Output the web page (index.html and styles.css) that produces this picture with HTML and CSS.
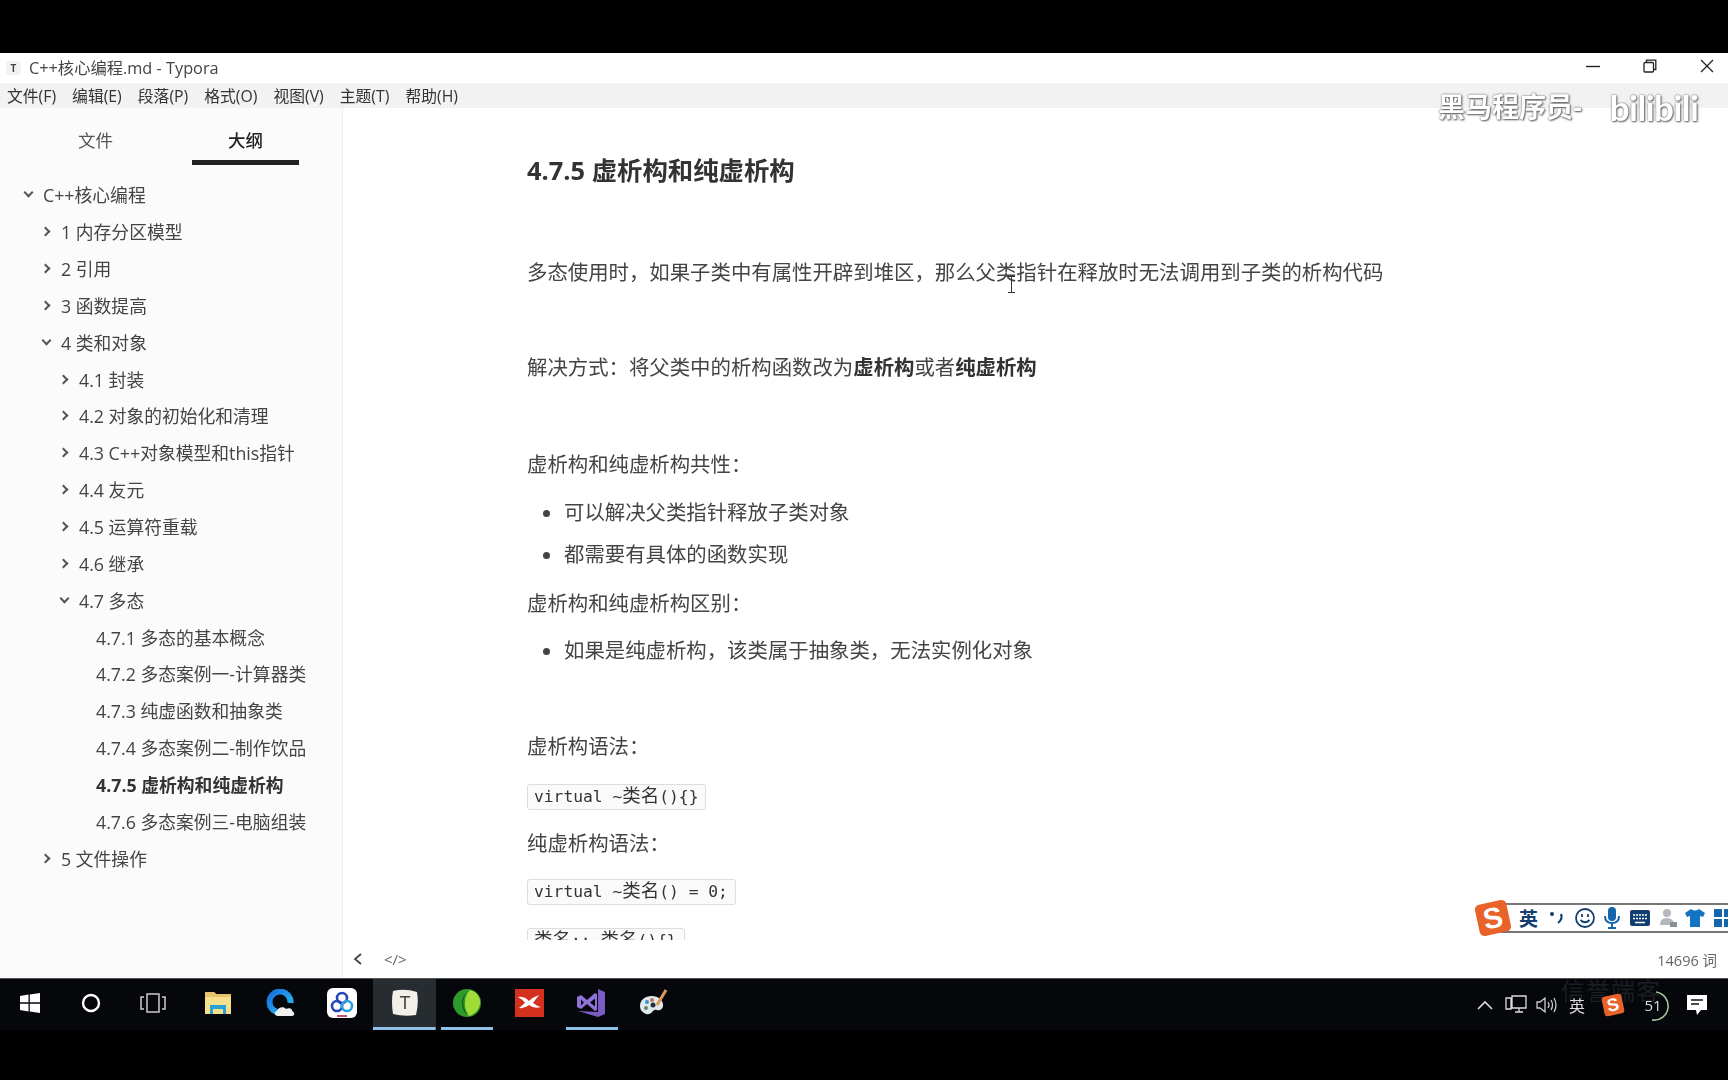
FILE: index.html
```html
<!DOCTYPE html>
<html lang="zh-CN">
<head>
  <meta charset="utf-8">
  <title>C++核心编程.md - Typora</title>
  <link rel="stylesheet" href="styles.css">
</head>
<body>
  <div id="screen">
    <div class="letterbox-top"></div>

    <div class="titlebar">
      <div class="title-icon">T</div>
      <div class="title-text">C++核心编程.md - Typora</div>
      <div class="win-controls">
        <svg width="14" height="14" viewBox="0 0 14 14"><path d="M0 7.5h14" stroke="#222" stroke-width="1.4"/></svg>
        <svg width="14" height="14" viewBox="0 0 14 14" fill="none" stroke="#222" stroke-width="1.3"><rect x="1" y="3.5" width="9.5" height="9.5" rx="1"/><path d="M3.5 3.5V1.2h9.3v9.3h-2.3"/></svg>
        <svg width="14" height="14" viewBox="0 0 14 14"><path d="M1 1l12 12M13 1L1 13" stroke="#222" stroke-width="1.3"/></svg>
      </div>
    </div>

    <div class="menubar">
      <span>文件(F)</span><span>编辑(E)</span><span>段落(P)</span><span>格式(O)</span><span>视图(V)</span><span>主题(T)</span><span>帮助(H)</span>
    </div>

    <div class="workspace">
      <div class="sidebar">
        <div class="tabs">
          <div class="tab">文件</div>
          <div class="tab tab-active">大纲</div>
        </div>
        <div class="outline">
          <div class="row lv0"><i class="arrow open"></i>C++核心编程</div>
          <div class="row lv1"><i class="arrow"></i>1 内存分区模型</div>
          <div class="row lv1"><i class="arrow"></i>2 引用</div>
          <div class="row lv1"><i class="arrow"></i>3 函数提高</div>
          <div class="row lv1"><i class="arrow open"></i>4 类和对象</div>
          <div class="row lv2"><i class="arrow"></i>4.1 封装</div>
          <div class="row lv2"><i class="arrow"></i>4.2 对象的初始化和清理</div>
          <div class="row lv2"><i class="arrow"></i>4.3 C++对象模型和this指针</div>
          <div class="row lv2"><i class="arrow"></i>4.4 友元</div>
          <div class="row lv2"><i class="arrow"></i>4.5 运算符重载</div>
          <div class="row lv2"><i class="arrow"></i>4.6 继承</div>
          <div class="row lv2"><i class="arrow open"></i>4.7 多态</div>
          <div class="row lv3">4.7.1 多态的基本概念</div>
          <div class="row lv3">4.7.2 多态案例一-计算器类</div>
          <div class="row lv3">4.7.3 纯虚函数和抽象类</div>
          <div class="row lv3">4.7.4 多态案例二-制作饮品</div>
          <div class="row lv3 current">4.7.5 虚析构和纯虚析构</div>
          <div class="row lv3">4.7.6 多态案例三-电脑组装</div>
          <div class="row lv1"><i class="arrow"></i>5 文件操作</div>
        </div>
      </div>

      <div class="editor">
        <div class="doc">
          <h3>4.7.5 虚析构和纯虚析构</h3>
          <p class="gap-a">多态使用时，如果子类中有属性开辟到堆区，那么父类指针在释放时无法调用到子类的析构代码</p>
          <p class="gap-b">解决方式：将父类中的析构函数改为<b>虚析构</b>或者<b>纯虚析构</b></p>
          <p class="gap-c">虚析构和纯虚析构共性：</p>
          <ul class="gap-d">
            <li>可以解决父类指针释放子类对象</li>
            <li>都需要有具体的函数实现</li>
          </ul>
          <p class="gap-e">虚析构和纯虚析构区别：</p>
          <ul class="gap-f">
            <li>如果是纯虚析构，该类属于抽象类，无法实例化对象</li>
          </ul>
          <p class="gap-j">虚析构语法：</p>
          <code class="gap-g">virtual ~<span class="han">类名</span>(){}</code>
          <p class="gap-k">纯虚析构语法：</p>
          <code class="gap-l">virtual ~<span class="han">类名</span>() = 0;</code>
          <code class="gap-i"><span class="han">类名</span>::~<span class="han">类名</span>(){}</code>
        </div>
        <div class="statusbar">
          <svg width="12" height="14" viewBox="0 0 12 14"><path d="M9 2L3 7l6 5" fill="none" stroke="#444" stroke-width="1.8"/></svg>
          <span class="src-toggle">&lt;/&gt;</span>
          <span class="wordcount">14696 词</span>
        </div>
      </div>
    </div>

    <div class="taskbar">
      <div class="task-icons">
        <div class="task-btn start">
          <svg width="24" height="24" viewBox="0 0 24 24" fill="#fff"><path d="M2 5l8.500-1.400v7.700H2zM11.800 3.400L22 2v9.300H11.800zM2 12.700h8.500v7.700L2 19zM11.800 12.700H22V22l-10.200-1.400z"/></svg>
        </div>
        <div class="task-btn">
          <svg width="24" height="24" viewBox="0 0 24 24"><circle cx="12" cy="12" r="8" fill="none" stroke="#fff" stroke-width="2.400"/></svg>
        </div>
        <div class="task-btn">
          <svg width="28" height="24" viewBox="0 0 28 24" fill="none" stroke="#ccc" stroke-width="1.500"><rect x="8" y="3" width="12" height="18"/><path d="M5 6H2v12h3M23 6h3v12h-3"/></svg>
        </div>
        <div class="task-btn first-app">
          <svg width="26" height="24" viewBox="0 0 26 24"><path d="M0 1h9l2 2h15v20H0z" fill="#f6e08e"/><path d="M0 1h9l2 2h15v3H0z" fill="#e3c46a"/><path d="M5 23v-9h16v9h-3v-5H8v5z" fill="#2aa0d8"/></svg>
        </div>
        <div class="task-btn">
          <svg width="30" height="28" viewBox="0 0 30 28"><defs><linearGradient id="qb" x1="0" y1="0" x2="1" y2="1"><stop offset="0" stop-color="#1a6fe0"/><stop offset="1" stop-color="#26c0f0"/></linearGradient></defs><path d="M14 23.500A10.500 10.500 0 1 1 25.500 14" fill="none" stroke="url(#qb)" stroke-width="6"/><path d="M13 27c-4 0-4-5-1-5 1-4 7-5 9-2 3-2 7 0 6 2 3 1 3 5 0 5z" fill="#eef0f2"/></svg>
        </div>
        <div class="task-btn">
          <svg width="30" height="30" viewBox="0 0 30 30"><rect width="30" height="30" rx="6" fill="#fff"/><g fill="none" stroke-width="2.600"><circle cx="15" cy="10" r="5" stroke="#2547b8"/><circle cx="10" cy="18" r="5" stroke="#2547b8"/><circle cx="20" cy="18" r="5" stroke="#2ea0e0"/></g><path d="M10 28h10" stroke="#c8506a" stroke-width="2"/></svg>
        </div>
        <div class="task-btn btn-active">
          <svg width="28" height="28" viewBox="0 0 28 28"><path d="M2 2q12-3 24 1q2 11-1 23q-12 2-23-1q-2-12 0-23z" fill="#f1efe8"/><text x="14" y="20" text-anchor="middle" class="icon-t">T</text></svg>
        </div>
        <div class="task-btn running">
          <svg width="28" height="28" viewBox="0 0 28 28"><circle cx="14" cy="14" r="14" fill="#2e9a2c"/><path d="M17 1c8 2 11 9 10 14-1 6-6 11-11 12-5-5-6-20 1-26z" fill="#a0dc38"/><path d="M14 4c-5 5-5 15 1 21-7-2-9-17-1-21z" fill="#17661a"/></svg>
        </div>
        <div class="task-btn">
          <svg width="29" height="28" viewBox="0 0 29 28"><rect width="29" height="28" fill="#d5301e"/><path d="M3 8q6-1 11 4 4-4 10-6l-6 8q4 3 8 4-7 2-12-2-5 4-10 3l6-5q-3-4-7-6z" fill="#fff"/></svg>
        </div>
        <div class="task-btn running">
          <svg width="32" height="30" viewBox="0 0 32 30"><path d="M22 1l7 3v22l-7 3-20-6 20 1z" fill="#7b5cc4"/><path d="M1 9l4-2 6 5 8-7 2 1v16l-2 1-8-7-6 5-4-2zM5 11.500v6l3-3zM14 14.500l5 4v-8z" fill="#8f74d8"/></svg>
        </div>
        <div class="task-btn">
          <svg width="30" height="30" viewBox="0 0 30 30"><path d="M1 18C1 10 10 6 18 9c7 3 8 11 3 13-4 1-4-2-7 1-3 4-6 4-9 2-3-2-4-4-4-7z" fill="#dfe8ea"/><circle cx="8" cy="14" r="2" fill="#3a8fd0"/><circle cx="13" cy="12" r="2" fill="#c8705a"/><circle cx="7" cy="20" r="2" fill="#5a8a5c"/><circle cx="14" cy="17" r="2.500" fill="#26323a"/><path d="M18 17L27 2" stroke="#d99a55" stroke-width="3"/></svg>
        </div>
      </div>
      <div class="tray">
        <div class="tray-mark">信誉端客</div>
        <svg width="16" height="10" viewBox="0 0 16 10"><path d="M1 9l7-7 7 7" fill="none" stroke="#ddd" stroke-width="1.600"/></svg>
        <svg width="22" height="20" viewBox="0 0 22 20" fill="none" stroke="#ddd" stroke-width="1.300"><path d="M7 1h14v12H7zM1 3h5v11H1zM10 17h8M14 13v4"/></svg>
        <svg width="22" height="18" viewBox="0 0 22 18" fill="none" stroke="#ccc" stroke-width="1.300"><path d="M1 6h3l5-4v14l-5-4H1zM12 6q2 3 0 6M15 4q3 5 0 10M18 2q4 7 0 14"/></svg>
        <span class="tray-ime">英</span>
        <div class="sogou sogou-small">S</div>
        <div class="ring">51
          <svg class="ring-arc" width="30" height="30" viewBox="0 0 30 30"><path d="M16 1a14 14 0 0 1-4 28" fill="none" stroke="#a8c8a0" stroke-width="1.600"/></svg>
        </div>
        <svg width="22" height="22" viewBox="0 0 22 22"><path d="M1 1h20v15h-6l-4 5-1-5H1z" fill="#fff"/><path d="M5 6h12M5 10h8" stroke="#111" stroke-width="1.500"/></svg>
      </div>
    </div>
    <div class="letterbox-bottom"></div>
  </div>

  <!-- stuff burned in on top of the recording -->
  <div class="watermark"><span class="wm-cn">黑马程序员-</span><span class="wm-bili">bilibili</span></div>

  <svg class="ibeam" width="9" height="17" viewBox="0 0 9 17"><path d="M1 .5h7M4.500 .5v16M1 16.500h7" stroke="#333" fill="none"/></svg>

  <div class="ime">
    <div class="sogou">S</div>
    <div class="ime-bar">
      <span class="ime-lang">英</span>
      <span class="ime-item"><svg width="20" height="18" viewBox="0 0 20 18"><circle cx="5" cy="5" r="2" fill="#123f70"/><path d="M14 5q2 5-3 9" fill="none" stroke="#123f70" stroke-width="2.200"/></svg></span>
      <span class="ime-item"><svg width="22" height="22" viewBox="0 0 22 22" fill="none" stroke="#123f70" stroke-width="1.800"><circle cx="11" cy="11" r="9"/><path d="M6.500 13q4.500 4.500 9 0"/><path d="M8 7v3M14 7v3"/></svg></span>
      <span class="ime-item"><svg width="18" height="22" viewBox="0 0 18 22" fill="none" stroke="#1566ac" stroke-width="2"><rect x="6" y="1" width="6" height="12" rx="3" fill="#1566ac"/><path d="M2 9q0 7 7 7t7-7M9 16v4M5 21h8"/></svg></span>
      <span class="ime-item"><svg width="22" height="18" viewBox="0 0 22 18"><rect x="1" y="1" width="20" height="16" rx="2" fill="#123f70"/><path d="M4 6h14M4 9.500h14" stroke="#fff" stroke-width="1.500" stroke-dasharray="2 1"/><path d="M6 13.500h10" stroke="#fff" stroke-width="1.500"/></svg></span>
      <span class="ime-item"><svg width="20" height="22" viewBox="0 0 20 22" fill="#b4b8bc"><circle cx="9" cy="6" r="4"/><path d="M2 18q0-7 7-7t7 7z"/><path d="M12 15h7v5h-7z" fill="#8a8f94"/></svg></span>
      <span class="ime-item"><svg width="22" height="20" viewBox="0 0 22 20"><path d="M7 1L1 5l2 4 3-1v11h10V8l3 1 2-4-6-4q-4 3-8 0z" fill="#1474c4"/></svg></span>
      <span class="ime-item"><svg width="20" height="20" viewBox="0 0 20 20" fill="#1566ac"><rect x="1" y="1" width="8" height="8"/><rect x="11" y="1" width="8" height="8"/><rect x="1" y="11" width="8" height="8"/><rect x="11" y="11" width="8" height="8"/></svg></span>
    </div>
  </div>
</body>
</html>
```

FILE: styles.css
```css
*, *:before, *:after { box-sizing: border-box; }
html, body { height: 100%; }
body {
  margin: 0;
  padding: 0;
  overflow: hidden;
  background-color: #000;
  color: #333;
  font-family: "Open Sans", "Noto Sans CJK SC", sans-serif;
}

/* the whole thing is a soft video frame */
#screen {
  display: flex;
  flex-direction: column;
  height: 100%;
  filter: blur(0.5px);
}
.letterbox-top { flex: 0 0 53px; background-color: #000; }
.letterbox-bottom { flex: 1; background-color: #000; }

/* title and menu */
.titlebar {
  flex: 0 0 30px;
  display: flex;
  align-items: center;
  background-color: #fff;
  padding-left: 6px;
}
.title-icon {
  width: 15px;
  margin-right: 8px;
  font-size: 10px;
  font-weight: 700;
  text-align: center;
  color: #444;
  background-color: #f2f2f2;
  border-radius: 2px;
}
.title-text { font-size: 16.300px; color: #444; margin-top: -2px; }
.win-controls {
  margin-left: auto;
  display: flex;
  gap: 43px;
  padding-right: 14px;
  margin-top: -5px;
}
.menubar {
  flex: 0 0 25px;
  display: flex;
  align-items: center;
  gap: 16px;
  padding-left: 7px;
  background-color: #f2f2f2;
  font-size: 15.800px;
  color: #333;
}

.workspace { flex: 0 0 870px; display: flex; }

/* sidebar */
.sidebar {
  flex: 0 0 343px;
  background-color: #fbfbfb;
  border-right: 1px solid #ececec;
}
.tabs { display: flex; height: 57px; padding-left: 42px; }
.tab {
  width: 107px;
  margin-right: 43px;
  padding-top: 18px;
  font-size: 17.500px;
  line-height: 28px;
  text-align: center;
  color: #555;
}
.tab-active {
  color: #222;
  font-weight: 500;
  border-bottom: 5px solid #222;
}
.outline { padding-top: 11px; }
.row {
  display: flex;
  align-items: center;
  height: 36.850px;
  font-size: 17.800px;
  color: #444;
  white-space: nowrap;
}
.lv0 { padding-left: 24px; }
.lv1 { padding-left: 42px; }
.lv2 { padding-left: 60px; }
.lv3 { padding-left: 96px; }
.current { font-weight: 700; color: #333; }
.arrow { flex: 0 0 19px; height: 8px; }
.arrow:before {
  content: "";
  display: block;
  width: 7px;
  height: 7px;
  margin-top: 1px;
  border-right: 2px solid #555;
  border-bottom: 2px solid #555;
  transform: rotate(-45deg);
}
.arrow.open:before { transform: rotate(45deg); margin-top: -1px; margin-left: 1px; }

/* editor */
.editor { flex: 1; display: flex; flex-direction: column; background-color: #fff; }
.doc {
  flex: 0 0 832px;
  overflow: hidden;
  padding: 44px 0 0 184px;
}
.doc h3 { margin: 0; font-size: 25.400px; line-height: 36px; font-weight: 700; color: #333; }
.doc p { margin: 0; font-size: 20.400px; line-height: 30px; color: #444; }
.doc p b { color: #333; }
.doc ul { margin: 0; padding: 0 0 0 37px; font-size: 20.400px; line-height: 30px; color: #444; }
.doc li + li { margin-top: 12px; }
.doc code {
  display: block;
  width: fit-content;
  height: 26px;
  padding: 0 7px 0 6px;
  border: 1px solid #ddd;
  border-radius: 3px;
  background-color: #fafafa;
  font-family: "DejaVu Sans Mono", monospace;
  font-size: 16.300px;
  line-height: 23px;
  color: #333;
  white-space: pre;
}
.doc code .han { font-family: "Noto Sans CJK SC", sans-serif; font-size: 18.500px; line-height: 16px; }
.gap-a { margin-top: 69px !important; }
.gap-b { margin-top: 65px !important; }
.gap-c { margin-top: 67px !important; }
.gap-d { margin-top: 18px !important; }
.gap-e { margin-top: 19px !important; }
.gap-f { margin-top: 17px !important; }
.gap-g { margin-top: 23px !important; }
.gap-i { margin-top: 23px !important; }
.gap-j { margin-top: 66px !important; }
.gap-k { margin-top: 18px !important; }
.gap-l { margin-top: 21px !important; }

.statusbar {
  flex: 1;
  display: flex;
  align-items: center;
  gap: 20px;
  padding: 0 11px 0 9px;
  font-size: 14.500px;
  color: #666;
}
.src-toggle { font-size: 15px; color: #666; }
.wordcount { margin-left: auto; }

/* windows taskbar */
.taskbar {
  flex: 0 0 52px;
  display: flex;
  align-items: stretch;
  justify-content: space-between;
  background-color: #05070b;
  border-top: 1px solid #555;
}
.task-icons { display: flex; }
.task-btn {
  width: 62.300px;
  display: flex;
  align-items: center;
  justify-content: center;
  padding-bottom: 3px;
}
.start { width: 60px; }
.first-app { margin-left: 2px; }
.btn-active {
  background: linear-gradient(#8fc1e8, #8fc1e8) bottom / 100% 3px no-repeat #262c30;
}
.running {
  background: linear-gradient(#8fc1e8, #8fc1e8) bottom / 52px 3px no-repeat;
}
.icon-t { font-family: "Liberation Sans", sans-serif; font-size: 18px; fill: #444; }
.tray {
  position: relative;
  isolation: isolate;
  display: grid;
  grid-template-columns: 31px 31px 31px 30px 42px 38px 50px;
  justify-items: center;
  align-items: center;
  padding-right: 6px;
  color: #ddd;
}
.tray-ime { font-size: 16px; }
.tray-mark {
  position: absolute;
  z-index: -1;
  left: 92px;
  top: 0;
  font-size: 24px;
  line-height: 24px;
  letter-spacing: 1px;
  color: #1b1e23;
}
.ring {
  position: relative;
  width: 30px;
  text-align: center;
  font-size: 15px;
}
.ring-arc { position: absolute; left: 2px; top: -4px; }

/* sogou ime bar, floats over the page */
.ime {
  position: absolute;
  left: 1477px;
  top: 899px;
  width: 251px;
  height: 38px;
  display: flex;
  align-items: center;
}
.ime-bar {
  position: absolute;
  left: 18px;
  top: 4px;
  right: 0;
  height: 30px;
  display: flex;
  align-items: center;
  padding-left: 22px;
  background-color: #fff;
  border: 2px solid #777;
  border-right: 0;
  border-radius: 4px 0 0 4px;
  overflow: hidden;
}
.ime-lang { flex: 0 0 24px; font-size: 19px; font-weight: 700; color: #123f70; }
.ime-item { flex: 0 0 27.700px; display: flex; justify-content: center; }
.sogou {
  position: relative;
  z-index: 1;
  width: 32px;
  height: 32px;
  border-radius: 5px;
  background-color: #e8632a;
  color: #fff;
  font-family: "Liberation Sans", sans-serif;
  font-size: 29px;
  font-weight: 700;
  line-height: 32px;
  text-align: center;
  transform: rotate(-12deg);
}
.sogou-small { width: 20px; height: 20px; font-size: 18px; line-height: 20px; border-radius: 3px; }

/* burned in */
.watermark {
  position: absolute;
  left: 1438px;
  top: 87px;
  display: flex;
  align-items: center;
  gap: 28px;
  color: #fff;
  text-shadow: 0 0 2px #555, 1px 1px 2px #666;
  filter: blur(0.6px);
}
.wm-cn { font-size: 27px; font-weight: 700; line-height: 40px; }
.wm-bili {
  font-family: "Lato", sans-serif;
  font-size: 35px;
  font-weight: 700;
  line-height: 40px;
  letter-spacing: -0.500px;
}
.ibeam { position: absolute; left: 1007px; top: 276px; }
```
